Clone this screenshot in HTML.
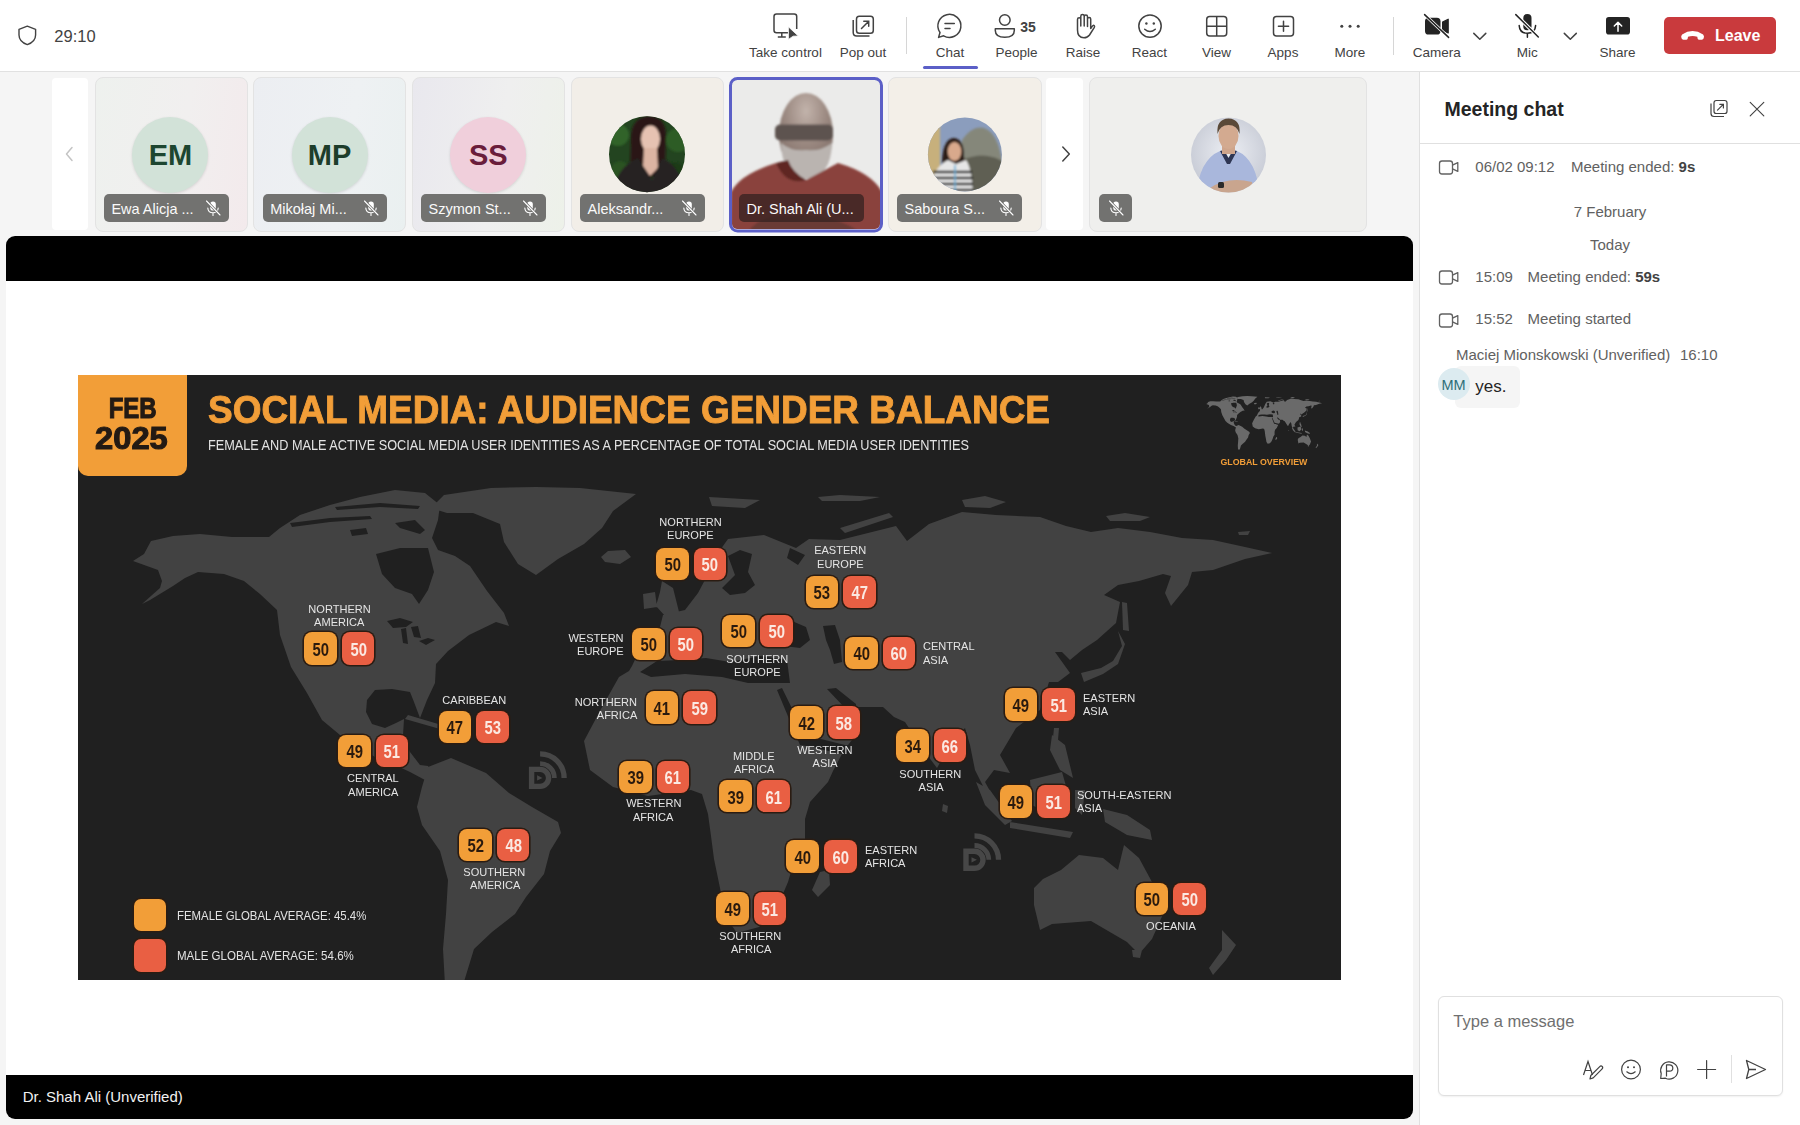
<!DOCTYPE html>
<html><head><meta charset="utf-8">
<style>
*{margin:0;padding:0;box-sizing:border-box}
html,body{width:1800px;height:1125px;overflow:hidden;background:#f5f5f5;font-family:"Liberation Sans",sans-serif;color:#242424;position:relative}
svg{overflow:visible}
</style></head><body>
<div style="position:absolute;left:0px;top:0px;width:1800px;height:71px;background:#fff"></div>
<div style="position:absolute;left:0px;top:71px;width:1800px;height:1px;background:#e1e1e1"></div>
<svg style="position:absolute;left:17px;top:24px;" width="22" height="23" viewBox="17 24 22 23"><path d="M27.3 26.2 L35.6 29.3 V35 C35.6 39.6 32.6 42.8 27.3 44.6 C22 42.8 19 39.6 19 35 V29.3 Z" fill="none" stroke="#424242" stroke-width="1.4" stroke-linejoin="round"/></svg>
<div style="position:absolute;left:54.3px;top:27.73px;font-size:16.5px;line-height:16.5px;color:#424242;font-weight:normal;white-space:nowrap;font-family:"Liberation Sans",sans-serif;">29:10</div>
<div style="position:absolute;left:285.5px;width:1000px;text-align:center;top:46.27px;font-size:13.5px;line-height:13.5px;color:#424242;font-weight:normal;white-space:nowrap;font-family:"Liberation Sans",sans-serif;">Take control</div>
<div style="position:absolute;left:363.0px;width:1000px;text-align:center;top:46.27px;font-size:13.5px;line-height:13.5px;color:#424242;font-weight:normal;white-space:nowrap;font-family:"Liberation Sans",sans-serif;">Pop out</div>
<div style="position:absolute;left:450.0px;width:1000px;text-align:center;top:46.27px;font-size:13.5px;line-height:13.5px;color:#424242;font-weight:normal;white-space:nowrap;font-family:"Liberation Sans",sans-serif;">Chat</div>
<div style="position:absolute;left:516.5px;width:1000px;text-align:center;top:46.27px;font-size:13.5px;line-height:13.5px;color:#424242;font-weight:normal;white-space:nowrap;font-family:"Liberation Sans",sans-serif;">People</div>
<div style="position:absolute;left:583.0px;width:1000px;text-align:center;top:46.27px;font-size:13.5px;line-height:13.5px;color:#424242;font-weight:normal;white-space:nowrap;font-family:"Liberation Sans",sans-serif;">Raise</div>
<div style="position:absolute;left:649.5px;width:1000px;text-align:center;top:46.27px;font-size:13.5px;line-height:13.5px;color:#424242;font-weight:normal;white-space:nowrap;font-family:"Liberation Sans",sans-serif;">React</div>
<div style="position:absolute;left:716.6px;width:1000px;text-align:center;top:46.27px;font-size:13.5px;line-height:13.5px;color:#424242;font-weight:normal;white-space:nowrap;font-family:"Liberation Sans",sans-serif;">View</div>
<div style="position:absolute;left:783.0px;width:1000px;text-align:center;top:46.27px;font-size:13.5px;line-height:13.5px;color:#424242;font-weight:normal;white-space:nowrap;font-family:"Liberation Sans",sans-serif;">Apps</div>
<div style="position:absolute;left:849.9px;width:1000px;text-align:center;top:46.27px;font-size:13.5px;line-height:13.5px;color:#424242;font-weight:normal;white-space:nowrap;font-family:"Liberation Sans",sans-serif;">More</div>
<div style="position:absolute;left:936.7px;width:1000px;text-align:center;top:46.27px;font-size:13.5px;line-height:13.5px;color:#424242;font-weight:normal;white-space:nowrap;font-family:"Liberation Sans",sans-serif;">Camera</div>
<div style="position:absolute;left:1027.2px;width:1000px;text-align:center;top:46.27px;font-size:13.5px;line-height:13.5px;color:#424242;font-weight:normal;white-space:nowrap;font-family:"Liberation Sans",sans-serif;">Mic</div>
<div style="position:absolute;left:1117.5px;width:1000px;text-align:center;top:46.27px;font-size:13.5px;line-height:13.5px;color:#424242;font-weight:normal;white-space:nowrap;font-family:"Liberation Sans",sans-serif;">Share</div>
<svg style="position:absolute;left:770px;top:10px;" width="32" height="32" viewBox="770 10 32 32"><path d="M788 32.8 H776.5 Q774 32.8 774 30.3 V16.5 Q774 14 776.5 14 H794.2 Q796.7 14 796.7 16.5 V29" fill="none" stroke="#424242" stroke-width="1.5"/><path d="M781.8 32.8 V37 M777.8 37 H785.8" stroke="#424242" stroke-width="1.5"/><path d="M788.4 26.8 L798.3 36 L793.2 36.2 L788.4 39.4 Z" fill="#424242" stroke="#fff" stroke-width="0.8" stroke-linejoin="round"/></svg>
<svg style="position:absolute;left:850px;top:12px;" width="26" height="27" viewBox="850 12 26 27"><rect x="856.5" y="16.2" width="16.8" height="17" rx="2.8" fill="none" stroke="#424242" stroke-width="1.5"/><path d="M853.2 20 V32.5 Q853.2 36 856.7 36 H869.5" fill="none" stroke="#424242" stroke-width="1.5"/><path d="M861.5 28.5 L868.5 21.5 M863.8 21.3 H868.7 V26.2" fill="none" stroke="#424242" stroke-width="1.5" stroke-linecap="round"/></svg>
<div style="position:absolute;left:906px;top:17px;width:1px;height:37px;background:#d6d6d6"></div>
<div style="position:absolute;left:1393px;top:17px;width:1px;height:38px;background:#d6d6d6"></div>
<svg style="position:absolute;left:934px;top:11px;" width="32" height="30" viewBox="934 11 32 30"><path d="M938.6 37.4 L940 32.5 A11.5 11.5 0 1 1 943.6 35.8 Z" fill="none" stroke="#424242" stroke-width="1.5" stroke-linejoin="round"/><path d="M945 23.6 H954.3 M945 28.5 H950" stroke="#424242" stroke-width="1.5" stroke-linecap="round"/></svg>
<div style="position:absolute;left:923px;top:66px;width:54.5px;height:3px;background:#5b5fc7;border-radius:2px"></div>
<svg style="position:absolute;left:990px;top:11px;" width="30" height="30" viewBox="990 11 30 30"><circle cx="1004.8" cy="20" r="5.3" fill="none" stroke="#424242" stroke-width="1.5"/><path d="M995.3 28.8 H1014.3 V30.5 Q1014.3 37.3 1004.8 37.3 Q995.3 37.3 995.3 30.5 Z" fill="none" stroke="#424242" stroke-width="1.5" stroke-linejoin="round"/></svg>
<div style="position:absolute;left:1020.3px;top:19.75px;font-size:14px;line-height:14px;color:#424242;font-weight:bold;white-space:nowrap;font-family:"Liberation Sans",sans-serif;">35</div>
<svg style="position:absolute;left:1070px;top:11px;" width="28" height="30" viewBox="1070 11 28 30"><path d="M1077.5 30 V19.5 Q1077.5 17.8 1079.2 17.8 Q1080.8 17.8 1080.8 19.5 V26 V16.2 Q1080.8 14.5 1082.5 14.5 Q1084.2 14.5 1084.2 16.2 V26 V16.8 Q1084.2 15.1 1085.9 15.1 Q1087.5 15.1 1087.5 16.8 V26.5 V19 Q1087.5 17.4 1089.1 17.4 Q1090.7 17.4 1090.7 19 V28.5 L1092.2 26.3 Q1093.3 24.7 1094.3 25.8 Q1094.9 26.5 1094.2 27.7 L1089.5 35 Q1087.5 37.8 1084 37.8 Q1077.5 37.8 1077.5 30 Z" fill="none" stroke="#424242" stroke-width="1.5" stroke-linejoin="round"/></svg>
<svg style="position:absolute;left:1134px;top:11px;" width="32" height="30" viewBox="1134 11 32 30"><circle cx="1150" cy="26.1" r="11.2" fill="none" stroke="#424242" stroke-width="1.5"/><circle cx="1146.4" cy="23.5" r="1.2" fill="#424242"/><circle cx="1153.8" cy="23.5" r="1.2" fill="#424242"/><path d="M1144.7 29.2 Q1150 33.8 1155.3 29.2" fill="none" stroke="#424242" stroke-width="1.5" stroke-linecap="round"/></svg>
<svg style="position:absolute;left:1202px;top:12px;" width="30" height="28" viewBox="1202 12 30 28"><rect x="1206.7" y="16.5" width="20" height="19.5" rx="3" fill="none" stroke="#424242" stroke-width="1.5"/><path d="M1216.7 16.5 V36 M1206.7 26.2 H1226.7" stroke="#424242" stroke-width="1.5"/></svg>
<svg style="position:absolute;left:1268px;top:12px;" width="30" height="28" viewBox="1268 12 30 28"><rect x="1273.5" y="16.5" width="20" height="19.5" rx="3" fill="none" stroke="#424242" stroke-width="1.5"/><path d="M1283.5 21.2 V31.3 M1278.4 26.2 H1288.6" stroke="#424242" stroke-width="1.5" stroke-linecap="round"/></svg>
<svg style="position:absolute;left:1336px;top:20px;" width="28" height="12" viewBox="1336 20 28 12"><circle cx="1341.8" cy="26.2" r="1.5" fill="#424242"/><circle cx="1350" cy="26.2" r="1.5" fill="#424242"/><circle cx="1358.2" cy="26.2" r="1.5" fill="#424242"/></svg>
<svg style="position:absolute;left:1420px;top:10px;" width="34" height="32" viewBox="1420 10 34 32"><rect x="1425" y="17.7" width="15.5" height="16.9" rx="3.6" fill="#242424"/><path d="M1442.6 22 L1448.2 19.2 V33 L1442.6 30.2 Z" fill="#242424" stroke="#242424" stroke-width="1.2" stroke-linejoin="round"/><path d="M1424.6 14.6 L1448.6 37.4" stroke="#fff" stroke-width="3"/><path d="M1424.6 14.6 L1448.6 37.4" stroke="#242424" stroke-width="1.5" stroke-linecap="round"/></svg>
<svg style="position:absolute;left:1470px;top:30px;" width="20" height="12" viewBox="1470 30 20 12"><path d="M1473.8 33.4 L1479.8 39.3 L1485.8 33.4" fill="none" stroke="#424242" stroke-width="1.5" stroke-linecap="round" stroke-linejoin="round"/></svg>
<svg style="position:absolute;left:1560px;top:30px;" width="20" height="12" viewBox="1560 30 20 12"><path d="M1564.3 33.4 L1570.3 39.3 L1576.3 33.4" fill="none" stroke="#424242" stroke-width="1.5" stroke-linecap="round" stroke-linejoin="round"/></svg>
<svg style="position:absolute;left:1512px;top:10px;" width="30" height="32" viewBox="1512 10 30 32"><rect x="1523.3" y="14" width="8.2" height="16.3" rx="4.1" fill="#242424"/><path d="M1519.2 25.6 Q1519.6 33.2 1527.4 33.2 Q1535.2 33.2 1535.6 25.6 M1527.4 33.2 V37.2" fill="none" stroke="#242424" stroke-width="1.5" stroke-linecap="round"/><path d="M1515.8 14.6 L1538.3 37" stroke="#fff" stroke-width="3.4"/><path d="M1515.8 14.6 L1538.3 37" stroke="#242424" stroke-width="1.5" stroke-linecap="round"/></svg>
<svg style="position:absolute;left:1602px;top:14px;" width="32" height="24" viewBox="1602 14 32 24"><rect x="1606" y="17" width="24" height="17.6" rx="2.8" fill="#242424"/><path d="M1618 31.3 V22.3 M1614.3 26 L1618 22.3 L1621.7 26" fill="none" stroke="#fff" stroke-width="1.5" stroke-linecap="round" stroke-linejoin="round"/></svg>
<div style="position:absolute;left:1663.5px;top:16.9px;width:112.2px;height:37.2px;background:#c93a3d;border-radius:5px"></div>
<svg style="position:absolute;left:1678px;top:26px;" width="30" height="18" viewBox="1678 26 30 18"><path d="M1681.5 38.2 Q1680.6 35.9 1682.1 34.4 Q1692.6 27.7 1703.1 34.4 Q1704.6 35.9 1703.7 38.2 Q1703.2 39.6 1701.8 39.7 L1699.2 39.7 Q1697.9 39.6 1697.6 38.4 L1697.3 36.8 Q1692.6 35 1688 36.8 L1687.7 38.4 Q1687.4 39.6 1686.1 39.7 L1683.4 39.7 Q1682 39.6 1681.5 38.2 Z" fill="#fff"/></svg>
<div style="position:absolute;left:1715.0px;top:28.06px;font-size:16px;line-height:16px;color:#fff;font-weight:bold;white-space:nowrap;font-family:"Liberation Sans",sans-serif;">Leave</div>
<div style="position:absolute;left:52px;top:78px;width:36px;height:152px;background:#fff;border-radius:4px"></div>
<svg style="position:absolute;left:62px;top:144px;" width="14" height="20" viewBox="62 144 14 20"><path d="M72 147.5 L66.5 154 L72 160.5" fill="none" stroke="#c4c4c4" stroke-width="1.5" stroke-linecap="round" stroke-linejoin="round"/></svg>
<div style="position:absolute;left:1046px;top:78px;width:37px;height:152px;background:#fff;border-radius:4px"></div>
<svg style="position:absolute;left:1058px;top:144px;" width="16" height="20" viewBox="1058 144 16 20"><path d="M1062.8 147 L1069.3 154 L1062.8 161" fill="none" stroke="#424242" stroke-width="1.5" stroke-linecap="round" stroke-linejoin="round"/></svg>
<div style="position:absolute;left:95px;top:77px;width:153px;height:155px;background:linear-gradient(100deg,#eef1ee 0%,#f1efef 55%,#f3eaec 100%);border:1px solid #e3e3e3;border-radius:8px"></div>
<div style="position:absolute;left:253px;top:77px;width:153px;height:155px;background:linear-gradient(100deg,#eceef2 0%,#eef1f3 60%,#eaf0f0 100%);border:1px solid #e3e3e3;border-radius:8px"></div>
<div style="position:absolute;left:412px;top:77px;width:153px;height:155px;background:linear-gradient(100deg,#e9e8ee 0%,#efefef 55%,#edf1e9 100%);border:1px solid #e3e3e3;border-radius:8px"></div>
<div style="position:absolute;left:571px;top:77px;width:153px;height:155px;background:#f2eee8;border:1px solid #e3e3e3;border-radius:8px"></div>
<div style="position:absolute;left:888px;top:77px;width:154px;height:155px;background:#f3efe8;border:1px solid #e3e3e3;border-radius:8px"></div>
<div style="position:absolute;left:1089px;top:77px;width:278px;height:155px;background:#efefed;border:1px solid #e3e3e3;border-radius:8px"></div>
<div style="position:absolute;left:132.4px;top:116.6px;width:76px;height:76px;border-radius:50%;background:#d2e2d8;box-shadow:0 1px 3px rgba(0,0,0,.12)"></div>
<div style="position:absolute;left:-329.6px;width:1000px;text-align:center;top:140.75px;font-size:29px;line-height:29px;color:#1d4630;font-weight:bold;white-space:nowrap;font-family:"Liberation Sans",sans-serif;letter-spacing:0.5px">EM</div>
<div style="position:absolute;left:291.5px;top:116.6px;width:76px;height:76px;border-radius:50%;background:#d2e2d8;box-shadow:0 1px 3px rgba(0,0,0,.12)"></div>
<div style="position:absolute;left:-170.5px;width:1000px;text-align:center;top:140.75px;font-size:29px;line-height:29px;color:#1d3d2b;font-weight:bold;white-space:nowrap;font-family:"Liberation Sans",sans-serif;letter-spacing:0.5px">MP</div>
<div style="position:absolute;left:450.3px;top:116.6px;width:76px;height:76px;border-radius:50%;background:#f0cfdb;box-shadow:0 1px 3px rgba(0,0,0,.12)"></div>
<div style="position:absolute;left:-11.7px;width:1000px;text-align:center;top:140.75px;font-size:29px;line-height:29px;color:#6a1d3b;font-weight:bold;white-space:nowrap;font-family:"Liberation Sans",sans-serif;letter-spacing:0.5px">SS</div>
<svg style="position:absolute;left:607px;top:114px;" width="80" height="80" viewBox="607 114 80 80"><defs><clipPath id="ca"><circle cx="647" cy="154.2" r="38"/></clipPath><filter id="b1"><feGaussianBlur stdDeviation="0.9"/></filter></defs><g clip-path="url(#ca)"><rect x="607" y="114" width="80" height="80" fill="#234420"/><g filter="url(#b1)"><circle cx="618" cy="135" r="11" fill="#356b2c" opacity=".8"/><circle cx="678" cy="140" r="12" fill="#2f6228" opacity=".8"/><circle cx="620" cy="170" r="9" fill="#2c5a25" opacity=".7"/><circle cx="675" cy="172" r="10" fill="#1b3a18"/><path d="M630 175 L631 135 Q633 116 650 116 Q666 117 666 136 L665 170 L650 178 Z" fill="#2a1813"/><ellipse cx="650.5" cy="139" rx="9.5" ry="13.5" fill="#e6c2b2"/><path d="M644 148 L657 148 L658 168 L650 176 L643 166 Z" fill="#dcb4a2"/><path d="M612 200 Q614 168 638 158 L652 180 L662 158 Q682 166 686 200 Z" fill="#252323"/></g></g></svg>
<svg style="position:absolute;left:926px;top:116px;" width="78" height="78" viewBox="926 116 78 78"><defs><clipPath id="cb"><circle cx="964.9" cy="154.4" r="37"/></clipPath><filter id="b2"><feGaussianBlur stdDeviation="0.8"/></filter></defs><g clip-path="url(#cb)"><rect x="926" y="116" width="78" height="78" fill="#8b9dbd"/><g filter="url(#b2)"><path d="M960 185 L962 140 Q975 122 988 130 Q1004 140 1004 194 L960 194 Z" fill="#85877a"/><path d="M962 160 Q985 150 1004 162 L1004 194 L962 194 Z" fill="#5f5f52"/><rect x="927" y="122" width="13" height="72" fill="#c7b07c"/><path d="M942 170 Q941 140 953 138 Q964 138 964 156 L966 172 Z" fill="#2a1c18"/><ellipse cx="954.5" cy="151.5" rx="6.8" ry="9.5" fill="#d9a98c"/><path d="M930 196 Q931 168 948 160 L956 164 L966 160 Q972 168 973 196 Z" fill="#e6e6e6"/><path d="M933 172 H972 M932 178 H973 M931 184 H973 M931 190 H973" stroke="#1e1e1e" stroke-width="2.6"/><path d="M955 165 V196" stroke="#6ab0d8" stroke-width="1.6"/></g></g></svg>
<svg style="position:absolute;left:1190px;top:117px;" width="78" height="78" viewBox="1190 117 78 78"><defs><clipPath id="cc"><circle cx="1228.5" cy="155" r="37.5"/></clipPath><filter id="b3"><feGaussianBlur stdDeviation="0.7"/></filter><radialGradient id="gg" cx=".5" cy=".45" r=".6"><stop offset="0" stop-color="#eceef3"/><stop offset="1" stop-color="#c3c7d2"/></radialGradient></defs><g clip-path="url(#cc)"><rect x="1190" y="117" width="78" height="78" fill="url(#gg)"/><g filter="url(#b3)"><path d="M1196 200 Q1198 160 1220 151 L1228 158 L1237 151 Q1258 160 1260 200 Z" fill="#a9b7dc"/><path d="M1220 151 L1227 164 L1230 164 L1237 151 L1233 150 L1228.5 158 L1224 150 Z" fill="#2d3552"/><rect x="1222" y="142" width="13" height="12" fill="#cfa58c"/><ellipse cx="1228.5" cy="136" rx="10" ry="13" fill="#d3aa90"/><path d="M1217.5 134 Q1216 119 1228.5 118.5 Q1241 119 1239.5 134 Q1237 125 1228.5 125 Q1220 125 1217.5 134 Z" fill="#5a4838"/><path d="M1210 188 Q1228 176 1252 182 L1254 194 L1210 196 Z" fill="#c9a58e"/><rect x="1218" y="182" width="6" height="6" rx="1.5" fill="#2a2a2a"/></g></g></svg>
<div style="position:absolute;left:103.9px;top:194px;width:125px;height:28px;background:#727270;border-radius:5px"></div>
<div style="position:absolute;left:111.4px;top:201.53px;font-size:14.5px;line-height:14.5px;color:#fafafa;font-weight:normal;white-space:nowrap;font-family:"Liberation Sans",sans-serif;">Ewa Alicja ...</div>
<svg style="position:absolute;left:205.9px;top:200px;" width="16" height="16" viewBox="205.9 200 16 16"><rect x="210.1" y="201.5" width="5.6" height="9" rx="2.8" fill="#fff"/><path d="M207.70000000000002 208.0 Q207.9 212.7 212.9 212.7 Q217.9 212.7 218.1 208.0 M212.9 212.7 V215.5" fill="none" stroke="#fff" stroke-width="1.1" stroke-linecap="round"/><path d="M206.4 201.0 L219.9 215.0" stroke="#6e6e6c" stroke-width="2.6"/><path d="M206.4 201.0 L219.9 215.0" stroke="#fff" stroke-width="1.1" stroke-linecap="round"/></svg>
<div style="position:absolute;left:262.7px;top:194px;width:124px;height:28px;background:#727270;border-radius:5px"></div>
<div style="position:absolute;left:270.2px;top:201.53px;font-size:14.5px;line-height:14.5px;color:#fafafa;font-weight:normal;white-space:nowrap;font-family:"Liberation Sans",sans-serif;">Mikołaj Mi...</div>
<svg style="position:absolute;left:363.7px;top:200px;" width="16" height="16" viewBox="363.7 200 16 16"><rect x="367.9" y="201.5" width="5.6" height="9" rx="2.8" fill="#fff"/><path d="M365.5 208.0 Q365.7 212.7 370.7 212.7 Q375.7 212.7 375.9 208.0 M370.7 212.7 V215.5" fill="none" stroke="#fff" stroke-width="1.1" stroke-linecap="round"/><path d="M364.2 201.0 L377.7 215.0" stroke="#6e6e6c" stroke-width="2.6"/><path d="M364.2 201.0 L377.7 215.0" stroke="#fff" stroke-width="1.1" stroke-linecap="round"/></svg>
<div style="position:absolute;left:421px;top:194px;width:125px;height:28px;background:#727270;border-radius:5px"></div>
<div style="position:absolute;left:428.5px;top:201.53px;font-size:14.5px;line-height:14.5px;color:#fafafa;font-weight:normal;white-space:nowrap;font-family:"Liberation Sans",sans-serif;">Szymon St...</div>
<svg style="position:absolute;left:523px;top:200px;" width="16" height="16" viewBox="523 200 16 16"><rect x="527.2" y="201.5" width="5.6" height="9" rx="2.8" fill="#fff"/><path d="M524.8 208.0 Q525 212.7 530 212.7 Q535 212.7 535.2 208.0 M530 212.7 V215.5" fill="none" stroke="#fff" stroke-width="1.1" stroke-linecap="round"/><path d="M523.5 201.0 L537 215.0" stroke="#6e6e6c" stroke-width="2.6"/><path d="M523.5 201.0 L537 215.0" stroke="#fff" stroke-width="1.1" stroke-linecap="round"/></svg>
<div style="position:absolute;left:580px;top:194px;width:125px;height:28px;background:#727270;border-radius:5px"></div>
<div style="position:absolute;left:587.5px;top:201.53px;font-size:14.5px;line-height:14.5px;color:#fafafa;font-weight:normal;white-space:nowrap;font-family:"Liberation Sans",sans-serif;">Aleksandr...</div>
<svg style="position:absolute;left:682px;top:200px;" width="16" height="16" viewBox="682 200 16 16"><rect x="686.2" y="201.5" width="5.6" height="9" rx="2.8" fill="#fff"/><path d="M683.8 208.0 Q684 212.7 689 212.7 Q694 212.7 694.2 208.0 M689 212.7 V215.5" fill="none" stroke="#fff" stroke-width="1.1" stroke-linecap="round"/><path d="M682.5 201.0 L696 215.0" stroke="#6e6e6c" stroke-width="2.6"/><path d="M682.5 201.0 L696 215.0" stroke="#fff" stroke-width="1.1" stroke-linecap="round"/></svg>
<div style="position:absolute;left:897px;top:194px;width:125px;height:28px;background:#727270;border-radius:5px"></div>
<div style="position:absolute;left:904.5px;top:201.53px;font-size:14.5px;line-height:14.5px;color:#fafafa;font-weight:normal;white-space:nowrap;font-family:"Liberation Sans",sans-serif;">Saboura S...</div>
<svg style="position:absolute;left:999px;top:200px;" width="16" height="16" viewBox="999 200 16 16"><rect x="1003.2" y="201.5" width="5.6" height="9" rx="2.8" fill="#fff"/><path d="M1000.8 208.0 Q1001 212.7 1006 212.7 Q1011 212.7 1011.2 208.0 M1006 212.7 V215.5" fill="none" stroke="#fff" stroke-width="1.1" stroke-linecap="round"/><path d="M999.5 201.0 L1013 215.0" stroke="#6e6e6c" stroke-width="2.6"/><path d="M999.5 201.0 L1013 215.0" stroke="#fff" stroke-width="1.1" stroke-linecap="round"/></svg>
<div style="position:absolute;left:1099px;top:194px;width:33px;height:28px;background:#727270;border-radius:5px"></div>
<svg style="position:absolute;left:1109px;top:200px;" width="16" height="16" viewBox="1109 200 16 16"><rect x="1113.2" y="201.5" width="5.6" height="9" rx="2.8" fill="#fff"/><path d="M1110.8 208.0 Q1111 212.7 1116 212.7 Q1121 212.7 1121.2 208.0 M1116 212.7 V215.5" fill="none" stroke="#fff" stroke-width="1.1" stroke-linecap="round"/><path d="M1109.5 201.0 L1123 215.0" stroke="#6e6e6c" stroke-width="2.6"/><path d="M1109.5 201.0 L1123 215.0" stroke="#fff" stroke-width="1.1" stroke-linecap="round"/></svg>
<svg style="position:absolute;left:729px;top:77px;" width="154" height="156" viewBox="729 77 154 156"><defs><clipPath id="cv"><rect x="732" y="80" width="148" height="149" rx="5"/></clipPath><filter id="bl" x="-10%" y="-10%" width="120%" height="120%"><feGaussianBlur stdDeviation="1.3"/></filter><radialGradient id="hd" cx=".5" cy=".22" r=".75"><stop offset="0" stop-color="#c2b3ab"/><stop offset=".5" stop-color="#9c8a82"/><stop offset="1" stop-color="#7d6c65"/></radialGradient></defs><g clip-path="url(#cv)"><rect x="732" y="80" width="148" height="149" fill="#ebebea"/><g filter="url(#bl)"><ellipse cx="806" cy="134" rx="27" ry="41" fill="url(#hd)"/><rect x="775" y="124.5" width="58" height="16" rx="5" fill="#5d5350"/><path d="M781 143 Q782 178 806 179 Q831 178 832 143 Q820 152 806 150 Q792 152 781 143 Z" fill="#bab4b0"/><path d="M730 235 L731 192 Q740 174 776 163 L806 180 L838 163 Q872 173 882 192 L882 235 Z" fill="#8a433d"/><path d="M776 163 Q786 186 806 180 Q792 172 788 160 Z" fill="#5e2624"/><path d="M748 232 Q760 214 790 216 Q830 212 860 232 Z" fill="#6b3b35"/></g></g><rect x="730.5" y="78.5" width="151" height="152.5" rx="7" fill="none" stroke="#5b5fc7" stroke-width="3"/></svg>
<div style="position:absolute;left:739px;top:194px;width:124.5px;height:28px;background:rgba(55,35,33,.78);border-radius:5px"></div>
<div style="position:absolute;left:746.5px;top:201.53px;font-size:14.5px;line-height:14.5px;color:#fafafa;font-weight:normal;white-space:nowrap;font-family:"Liberation Sans",sans-serif;">Dr. Shah Ali (U...</div>
<div style="position:absolute;left:6px;top:236px;width:1407px;height:883px;background:#fff;border-radius:9px;overflow:hidden"></div>
<div style="position:absolute;left:6px;top:236px;width:1407px;height:45px;background:#000;border-radius:9px 9px 0 0"></div>
<div style="position:absolute;left:6px;top:1075px;width:1407px;height:44px;background:#000;border-radius:0 0 9px 9px"></div>
<div style="position:absolute;left:22.7px;top:1088.80px;font-size:15px;line-height:15px;color:#f2f2f2;font-weight:normal;white-space:nowrap;font-family:"Liberation Sans",sans-serif;">Dr. Shah Ali (Unverified)</div>
<div style="position:absolute;left:78px;top:375px;width:1263px;height:605px;background:#202020"></div>
<svg style="position:absolute;left:78px;top:375px;" width="1263" height="605" viewBox="78 375 1263 605"><defs><clipPath id="slc"><rect x="78" y="375" width="1263" height="605"/></clipPath></defs><g clip-path="url(#slc)"><path d="M144 554 L151 541 L173 536 L200 534 L232 537 L269 537 L280 528 L300 515 L330 505 L360 497 L395 490 L425 493 L440 505 L438 520 L432 538 L438 550 L455 556 L470 566 L487 591 L504 613 L509 626 L496 622 L469 635 L448 651 L436 664 L435 683 L427 700 L420 718 L414 702 L410 692 L392 689 L375 690 L367 700 L366 712 L372 724 L385 728 L396 723 L404 719 L403 735 L410 752 L420 765 L428 766 L432 777 L425 780 L410 772 L395 765 L375 757 L355 745 L340 735 L322 720 L307 693 L291 667 L280 635 L277 610 L260 594 L244 581 L224 574 L198 572 L185 578 L173 586 L150 600 L142 604 L160 588 L162 581 L158 570 L133 561 Z M431 508 L444 495 L491 488 L536 487 L580 488 L636 494 L613 511 L602 528 L584 544 L558 559 L536 575 L518 564 L504 542 L500 524 L473 513 L447 513 Z M428 767 L451 758 L486 773 L509 793 L532 807 L558 822 L561 833 L550 851 L544 874 L526 897 L515 914 L492 932 L474 949 L463 985 L445 985 L443 949 L446 914 L448 880 L440 851 L422 825 L417 807 L422 787 Z M629 671 L632 666 L642 645 L648 639 L660 627 L663 615 L685 610 L698 593 L706 578 L713 560 L728 539 L764 535 L796 548 L809 539 L840 540 L896 526 L907 541 L929 524 L962 512 L996 515 L1040 517 L1066 526 L1091 532 L1118 528 L1150 532 L1182 538 L1213 540 L1245 547 L1272 553 L1245 559 L1213 570 L1192 572 L1188 585 L1171 606 L1165 593 L1171 576 L1163 574 L1139 581 L1118 585 L1104 595 L1120 602 L1116 623 L1097 640 L1082 650 L1070 660 L1062 652 L1055 652 L1070 673 L1058 682 L1049 682 L1040 710 L1016 728 L1000 755 L1010 773 L994 770 L985 782 L1000 809 L985 790 L975 770 L970 745 L965 728 L950 745 L937 768 L922 748 L905 722 L894 717 L883 707 L856 707 L860 730 L848 745 L830 748 L815 748 L842 754 L833 771 L828 782 L810 802 L805 819 L805 848 L793 865 L788 882 L776 910 L759 927 L737 933 L725 916 L720 888 L714 859 L711 836 L708 814 L702 794 L691 790 L648 796 L613 787 L590 770 L584 741 L601 709 L619 677 Z M601 557 L608 551 L625 550 L631 557 L620 564 L605 562 Z M662 581 L673 588 L679 612 L665 616 L656 606 L660 592 Z M643 594 L655 592 L657 607 L644 609 Z M820 872 L829 870 L830 885 L818 897 L812 890 Z M943 804 L948 806 L947 813 L942 811 Z M1118 631 L1125 644 L1118 664 L1103 674 L1084 682 L1081 673 L1101 668 L1113 661 L1122 646 Z M1122 602 L1127 603 L1129 631 L1123 630 Z M1054 728 L1059 728 L1058 740 L1053 738 Z M1052 735 L1065 745 L1073 778 L1060 770 L1050 750 Z M976 782 L990 790 L1012 821 L1005 825 L985 805 Z M1010 822 L1073 832 L1070 838 L1010 828 Z M1030 780 L1062 772 L1070 800 L1050 815 L1032 805 Z M1075 790 L1085 790 L1082 815 L1075 808 Z M1103 809 L1127 815 L1150 830 L1152 840 L1127 835 L1105 822 Z M1034 888 L1043 879 L1061 870 L1079 855 L1103 858 L1118 870 L1124 845 L1139 858 L1152 882 L1164 912 L1152 939 L1139 954 L1127 942 L1091 921 L1052 924 L1040 930 L1034 905 Z M1132 950 L1142 950 L1140 958 L1133 957 Z M1222 930 L1236 945 L1226 960 L1213 975 L1209 968 L1222 950 Z M408 715 L445 726 L440 729 L405 719 Z M709 497 L760 500 L745 508 L712 506 Z M840 528 L889 513 L893 517 L845 533 Z M962 500 L985 496 L1006 502 L990 508 L965 507 Z M1106 516 L1125 513 L1150 517 L1140 521 L1110 521 Z M1238 532 L1250 531 L1248 535 L1239 535 Z M818 497 L840 495 L880 497 L860 501 L822 501 Z" fill="#424242"/><path d="M387 621 L400 618 L413 622 L406 627 L393 628 Z M401 629 L406 628 L408 644 L403 643 Z M411 627 L418 626 L421 638 L414 637 Z M419 641 L428 638 L435 640 L426 645 Z M290 523 L330 518 L370 516 L372 519 L330 522 L292 527 Z M335 507 L380 503 L420 506 L418 509 L380 507 L337 510 Z M395 523 L415 520 L425 530 L420 534 L400 528 Z M350 530 L366 528 L368 534 L352 536 Z M640 672 L657 661 L680 660 L706 658 L730 662 L760 656 L787 660 L790 683 L748 683 L722 677 L685 674 L651 677 Z M776 628 L792 621 L806 627 L810 640 L800 648 L784 646 L775 638 Z M823 626 L835 625 L840 640 L842 662 L834 664 L830 650 L826 640 Z M728 556 L740 550 L752 554 L748 572 L755 585 L745 593 L730 595 L722 588 L735 575 Z M777 690 L782 688 L805 735 L845 745 L845 752 L800 745 Z M827 689 L836 688 L856 704 L856 710 L845 708 Z M790 548 L805 555 L798 565 L787 558 Z M376 554 L400 548 L428 548 L434 572 L428 590 L419 604 L412 594 L395 588 L382 574 Z" fill="#202020"/></g></svg>
<svg style="position:absolute;left:1206px;top:395.5px;overflow:visible" width="118" height="56" viewBox="0 0 118 56"><g transform="scale(0.1016,0.107) translate(-130,-486)"><path d="M144 554 L151 541 L173 536 L200 534 L232 537 L269 537 L280 528 L300 515 L330 505 L360 497 L395 490 L425 493 L440 505 L438 520 L432 538 L438 550 L455 556 L470 566 L487 591 L504 613 L509 626 L496 622 L469 635 L448 651 L436 664 L435 683 L427 700 L420 718 L414 702 L410 692 L392 689 L375 690 L367 700 L366 712 L372 724 L385 728 L396 723 L404 719 L403 735 L410 752 L420 765 L428 766 L432 777 L425 780 L410 772 L395 765 L375 757 L355 745 L340 735 L322 720 L307 693 L291 667 L280 635 L277 610 L260 594 L244 581 L224 574 L198 572 L185 578 L173 586 L150 600 L142 604 L160 588 L162 581 L158 570 L133 561 Z M431 508 L444 495 L491 488 L536 487 L580 488 L636 494 L613 511 L602 528 L584 544 L558 559 L536 575 L518 564 L504 542 L500 524 L473 513 L447 513 Z M428 767 L451 758 L486 773 L509 793 L532 807 L558 822 L561 833 L550 851 L544 874 L526 897 L515 914 L492 932 L474 949 L463 985 L445 985 L443 949 L446 914 L448 880 L440 851 L422 825 L417 807 L422 787 Z M629 671 L632 666 L642 645 L648 639 L660 627 L663 615 L685 610 L698 593 L706 578 L713 560 L728 539 L764 535 L796 548 L809 539 L840 540 L896 526 L907 541 L929 524 L962 512 L996 515 L1040 517 L1066 526 L1091 532 L1118 528 L1150 532 L1182 538 L1213 540 L1245 547 L1272 553 L1245 559 L1213 570 L1192 572 L1188 585 L1171 606 L1165 593 L1171 576 L1163 574 L1139 581 L1118 585 L1104 595 L1120 602 L1116 623 L1097 640 L1082 650 L1070 660 L1062 652 L1055 652 L1070 673 L1058 682 L1049 682 L1040 710 L1016 728 L1000 755 L1010 773 L994 770 L985 782 L1000 809 L985 790 L975 770 L970 745 L965 728 L950 745 L937 768 L922 748 L905 722 L894 717 L883 707 L856 707 L860 730 L848 745 L830 748 L815 748 L842 754 L833 771 L828 782 L810 802 L805 819 L805 848 L793 865 L788 882 L776 910 L759 927 L737 933 L725 916 L720 888 L714 859 L711 836 L708 814 L702 794 L691 790 L648 796 L613 787 L590 770 L584 741 L601 709 L619 677 Z M601 557 L608 551 L625 550 L631 557 L620 564 L605 562 Z M662 581 L673 588 L679 612 L665 616 L656 606 L660 592 Z M643 594 L655 592 L657 607 L644 609 Z M820 872 L829 870 L830 885 L818 897 L812 890 Z M943 804 L948 806 L947 813 L942 811 Z M1118 631 L1125 644 L1118 664 L1103 674 L1084 682 L1081 673 L1101 668 L1113 661 L1122 646 Z M1122 602 L1127 603 L1129 631 L1123 630 Z M1054 728 L1059 728 L1058 740 L1053 738 Z M1052 735 L1065 745 L1073 778 L1060 770 L1050 750 Z M976 782 L990 790 L1012 821 L1005 825 L985 805 Z M1010 822 L1073 832 L1070 838 L1010 828 Z M1030 780 L1062 772 L1070 800 L1050 815 L1032 805 Z M1075 790 L1085 790 L1082 815 L1075 808 Z M1103 809 L1127 815 L1150 830 L1152 840 L1127 835 L1105 822 Z M1034 888 L1043 879 L1061 870 L1079 855 L1103 858 L1118 870 L1124 845 L1139 858 L1152 882 L1164 912 L1152 939 L1139 954 L1127 942 L1091 921 L1052 924 L1040 930 L1034 905 Z M1132 950 L1142 950 L1140 958 L1133 957 Z M1222 930 L1236 945 L1226 960 L1213 975 L1209 968 L1222 950 Z M408 715 L445 726 L440 729 L405 719 Z M709 497 L760 500 L745 508 L712 506 Z M840 528 L889 513 L893 517 L845 533 Z M962 500 L985 496 L1006 502 L990 508 L965 507 Z M1106 516 L1125 513 L1150 517 L1140 521 L1110 521 Z M1238 532 L1250 531 L1248 535 L1239 535 Z M818 497 L840 495 L880 497 L860 501 L822 501 Z" fill="#6a6a6a"/><path d="M387 621 L400 618 L413 622 L406 627 L393 628 Z M401 629 L406 628 L408 644 L403 643 Z M411 627 L418 626 L421 638 L414 637 Z M419 641 L428 638 L435 640 L426 645 Z M290 523 L330 518 L370 516 L372 519 L330 522 L292 527 Z M335 507 L380 503 L420 506 L418 509 L380 507 L337 510 Z M395 523 L415 520 L425 530 L420 534 L400 528 Z M350 530 L366 528 L368 534 L352 536 Z M640 672 L657 661 L680 660 L706 658 L730 662 L760 656 L787 660 L790 683 L748 683 L722 677 L685 674 L651 677 Z M776 628 L792 621 L806 627 L810 640 L800 648 L784 646 L775 638 Z M823 626 L835 625 L840 640 L842 662 L834 664 L830 650 L826 640 Z M728 556 L740 550 L752 554 L748 572 L755 585 L745 593 L730 595 L722 588 L735 575 Z M777 690 L782 688 L805 735 L845 745 L845 752 L800 745 Z M827 689 L836 688 L856 704 L856 710 L845 708 Z M790 548 L805 555 L798 565 L787 558 Z M376 554 L400 548 L428 548 L434 572 L428 590 L419 604 L412 594 L395 588 L382 574 Z" fill="#202020"/></g></svg>
<svg style="position:absolute;left:78px;top:375px;" width="1263" height="605" viewBox="78 375 1263 605"><path fill-rule="evenodd" fill="#474747" d="M528.9 766.7 H540.1 A11.2 11.2 0 0 1 540.1 789.1 H528.9 Z M534.3 772.1 H540.1 A5.8 5.8 0 0 1 540.1 783.7 H534.3 Z"/><path fill="#474747" d="M537.1 775.3000000000001 L542.5 777.9000000000001 L537.1 780.5 Z"/><path fill="none" stroke="#474747" stroke-width="4.8" d="M540.1 763.6000000000001 A14.3 14.3 0 0 1 554.4 777.9000000000001"/><path fill="none" stroke="#474747" stroke-width="5.3" d="M540.1 753.9000000000001 A24 24 0 0 1 564.1 777.9000000000001"/><path fill-rule="evenodd" fill="#474747" d="M963.3 848.6 H974.5 A11.2 11.2 0 0 1 974.5 871.0 H963.3 Z M968.6999999999999 854.0 H974.5 A5.8 5.8 0 0 1 974.5 865.6 H968.6999999999999 Z"/><path fill="#474747" d="M971.5 857.2 L976.9 859.8000000000001 L971.5 862.4 Z"/><path fill="none" stroke="#474747" stroke-width="4.8" d="M974.5 845.5000000000001 A14.3 14.3 0 0 1 988.8 859.8000000000001"/><path fill="none" stroke="#474747" stroke-width="5.3" d="M974.5 835.8000000000001 A24 24 0 0 1 998.5 859.8000000000001"/></svg>
<div style="position:absolute;left:78px;top:375px;width:109px;height:101px;background:#f29e38;border-radius:0 0 10px 10px"></div>
<div style="position:absolute;left:102.51px;top:392.83px;width:61.0px;font-size:29.5px;line-height:29.5px;color:#231a14;font-weight:bold;white-space:nowrap;transform:scale(0.8138,1.0);transform-origin:center 25.1px;-webkit-text-stroke:1.1px #231a14;">FEB</div>
<div style="position:absolute;left:96.53px;top:423.26px;width:70.9px;font-size:31px;line-height:31px;color:#231a14;font-weight:bold;white-space:nowrap;transform:scale(1.0546,1.0);transform-origin:center 26.3px;-webkit-text-stroke:1.1px #231a14;">2025</div>
<div style="position:absolute;left:208.00px;top:390.26px;width:901.8px;font-size:39.5px;line-height:39.5px;color:#f29e38;font-weight:bold;white-space:nowrap;transform:scale(0.9358,1.0);transform-origin:left 33.6px;-webkit-text-stroke:0.9px #f29e38;">SOCIAL MEDIA: AUDIENCE GENDER BALANCE</div>
<div style="position:absolute;left:208.00px;top:437.53px;width:871.2px;font-size:14.5px;line-height:14.5px;color:#e2e2e2;font-weight:normal;white-space:nowrap;transform:scale(0.8755,1.0);transform-origin:left 12.3px;">FEMALE AND MALE ACTIVE SOCIAL MEDIA USER IDENTITIES AS A PERCENTAGE OF TOTAL SOCIAL MEDIA USER IDENTITIES</div>
<div style="position:absolute;left:1216.69px;top:456.76px;width:95.6px;font-size:9.5px;line-height:9.5px;color:#f29e38;font-weight:bold;white-space:nowrap;transform:scale(0.9292,1.0);transform-origin:center 8.1px;">GLOBAL OVERVIEW</div>
<div style="position:absolute;left:134.3px;top:898.7px;width:32px;height:32.6px;background:#f29e38;border-radius:7px;box-shadow:0 0 0 1.5px #2a1c12"></div>
<div style="position:absolute;left:134.3px;top:939.1px;width:32px;height:32.6px;background:#e95f43;border-radius:7px;box-shadow:0 0 0 1.5px #2a1c12"></div>
<div style="position:absolute;left:177.20px;top:909.40px;width:218.0px;font-size:13px;line-height:13px;color:#e2e2e2;font-weight:normal;white-space:nowrap;transform:scale(0.8762,1.0);transform-origin:left 11.0px;">FEMALE GLOBAL AVERAGE: 45.4%</div>
<div style="position:absolute;left:177.20px;top:949.10px;width:201.4px;font-size:13px;line-height:13px;color:#e2e2e2;font-weight:normal;white-space:nowrap;transform:scale(0.8865,1.0);transform-origin:left 11.0px;">MALE GLOBAL AVERAGE: 54.6%</div>
<div style="position:absolute;left:304.3px;top:632.4px;width:32.6px;height:32.4px;background:#f29e38;border-radius:8px;box-shadow:0 0 0 1.6px #2b1c12"></div>
<div style="position:absolute;left:310.04px;top:639.82px;width:23.1px;font-size:19px;line-height:19px;color:#2a1a0e;font-weight:bold;white-space:nowrap;transform:scale(0.7811,1.0);transform-origin:center 16.1px;">50</div>
<div style="position:absolute;left:341.90000000000003px;top:632.4px;width:32.6px;height:32.4px;background:#e95f43;border-radius:8px;box-shadow:0 0 0 1.6px #2b1c12"></div>
<div style="position:absolute;left:347.64px;top:639.82px;width:23.1px;font-size:19px;line-height:19px;color:#fbe9e2;font-weight:bold;white-space:nowrap;transform:scale(0.7811,1.0);transform-origin:center 16.1px;">50</div>
<div style="position:absolute;left:306.90px;top:603.57px;width:67.0px;font-size:11.5px;line-height:11.5px;color:#e4e4e4;font-weight:normal;white-space:nowrap;transform:scale(0.9600,1.0);transform-origin:center 9.8px;">NORTHERN</div>
<div style="position:absolute;left:313.20px;top:616.77px;width:54.4px;font-size:11.5px;line-height:11.5px;color:#e4e4e4;font-weight:normal;white-space:nowrap;transform:scale(0.9600,1.0);transform-origin:center 9.8px;">AMERICA</div>
<div style="position:absolute;left:438.7px;top:711.0px;width:32.6px;height:32.4px;background:#f29e38;border-radius:8px;box-shadow:0 0 0 1.6px #2b1c12"></div>
<div style="position:absolute;left:444.44px;top:718.42px;width:23.1px;font-size:19px;line-height:19px;color:#2a1a0e;font-weight:bold;white-space:nowrap;transform:scale(0.7811,1.0);transform-origin:center 16.1px;">47</div>
<div style="position:absolute;left:476.3px;top:711.0px;width:32.6px;height:32.4px;background:#e95f43;border-radius:8px;box-shadow:0 0 0 1.6px #2b1c12"></div>
<div style="position:absolute;left:482.04px;top:718.42px;width:23.1px;font-size:19px;line-height:19px;color:#fbe9e2;font-weight:bold;white-space:nowrap;transform:scale(0.7811,1.0);transform-origin:center 16.1px;">53</div>
<div style="position:absolute;left:440.56px;top:694.57px;width:68.5px;font-size:11.5px;line-height:11.5px;color:#e4e4e4;font-weight:normal;white-space:nowrap;transform:scale(0.9600,1.0);transform-origin:center 9.8px;">CARIBBEAN</div>
<div style="position:absolute;left:338.09999999999997px;top:734.9px;width:32.6px;height:32.4px;background:#f29e38;border-radius:8px;box-shadow:0 0 0 1.6px #2b1c12"></div>
<div style="position:absolute;left:343.84px;top:742.32px;width:23.1px;font-size:19px;line-height:19px;color:#2a1a0e;font-weight:bold;white-space:nowrap;transform:scale(0.7811,1.0);transform-origin:center 16.1px;">49</div>
<div style="position:absolute;left:375.7px;top:734.9px;width:32.6px;height:32.4px;background:#e95f43;border-radius:8px;box-shadow:0 0 0 1.6px #2b1c12"></div>
<div style="position:absolute;left:381.44px;top:742.32px;width:23.1px;font-size:19px;line-height:19px;color:#fbe9e2;font-weight:bold;white-space:nowrap;transform:scale(0.7811,1.0);transform-origin:center 16.1px;">51</div>
<div style="position:absolute;left:345.95px;top:773.47px;width:55.7px;font-size:11.5px;line-height:11.5px;color:#e4e4e4;font-weight:normal;white-space:nowrap;transform:scale(0.9600,1.0);transform-origin:center 9.8px;">CENTRAL</div>
<div style="position:absolute;left:346.60px;top:786.67px;width:54.4px;font-size:11.5px;line-height:11.5px;color:#e4e4e4;font-weight:normal;white-space:nowrap;transform:scale(0.9600,1.0);transform-origin:center 9.8px;">AMERICA</div>
<div style="position:absolute;left:459.3px;top:828.8px;width:32.6px;height:32.4px;background:#f29e38;border-radius:8px;box-shadow:0 0 0 1.6px #2b1c12"></div>
<div style="position:absolute;left:465.04px;top:836.22px;width:23.1px;font-size:19px;line-height:19px;color:#2a1a0e;font-weight:bold;white-space:nowrap;transform:scale(0.7811,1.0);transform-origin:center 16.1px;">52</div>
<div style="position:absolute;left:496.90000000000003px;top:828.8px;width:32.6px;height:32.4px;background:#e95f43;border-radius:8px;box-shadow:0 0 0 1.6px #2b1c12"></div>
<div style="position:absolute;left:502.64px;top:836.22px;width:23.1px;font-size:19px;line-height:19px;color:#fbe9e2;font-weight:bold;white-space:nowrap;transform:scale(0.7811,1.0);transform-origin:center 16.1px;">48</div>
<div style="position:absolute;left:462.42px;top:866.77px;width:66.6px;font-size:11.5px;line-height:11.5px;color:#e4e4e4;font-weight:normal;white-space:nowrap;transform:scale(0.9600,1.0);transform-origin:center 9.8px;">SOUTHERN</div>
<div style="position:absolute;left:468.50px;top:879.97px;width:54.4px;font-size:11.5px;line-height:11.5px;color:#e4e4e4;font-weight:normal;white-space:nowrap;transform:scale(0.9600,1.0);transform-origin:center 9.8px;">AMERICA</div>
<div style="position:absolute;left:656.0px;top:547.5px;width:32.6px;height:32.4px;background:#f29e38;border-radius:8px;box-shadow:0 0 0 1.6px #2b1c12"></div>
<div style="position:absolute;left:661.74px;top:554.92px;width:23.1px;font-size:19px;line-height:19px;color:#2a1a0e;font-weight:bold;white-space:nowrap;transform:scale(0.7811,1.0);transform-origin:center 16.1px;">50</div>
<div style="position:absolute;left:693.6px;top:547.5px;width:32.6px;height:32.4px;background:#e95f43;border-radius:8px;box-shadow:0 0 0 1.6px #2b1c12"></div>
<div style="position:absolute;left:699.34px;top:554.92px;width:23.1px;font-size:19px;line-height:19px;color:#fbe9e2;font-weight:bold;white-space:nowrap;transform:scale(0.7811,1.0);transform-origin:center 16.1px;">50</div>
<div style="position:absolute;left:658.10px;top:516.67px;width:67.0px;font-size:11.5px;line-height:11.5px;color:#e4e4e4;font-weight:normal;white-space:nowrap;transform:scale(0.9600,1.0);transform-origin:center 9.8px;">NORTHERN</div>
<div style="position:absolute;left:666.31px;top:529.87px;width:50.6px;font-size:11.5px;line-height:11.5px;color:#e4e4e4;font-weight:normal;white-space:nowrap;transform:scale(0.9600,1.0);transform-origin:center 9.8px;">EUROPE</div>
<div style="position:absolute;left:632.0px;top:627.8px;width:32.6px;height:32.4px;background:#f29e38;border-radius:8px;box-shadow:0 0 0 1.6px #2b1c12"></div>
<div style="position:absolute;left:637.74px;top:635.22px;width:23.1px;font-size:19px;line-height:19px;color:#2a1a0e;font-weight:bold;white-space:nowrap;transform:scale(0.7811,1.0);transform-origin:center 16.1px;">50</div>
<div style="position:absolute;left:669.6px;top:627.8px;width:32.6px;height:32.4px;background:#e95f43;border-radius:8px;box-shadow:0 0 0 1.6px #2b1c12"></div>
<div style="position:absolute;left:675.34px;top:635.22px;width:23.1px;font-size:19px;line-height:19px;color:#fbe9e2;font-weight:bold;white-space:nowrap;transform:scale(0.7811,1.0);transform-origin:center 16.1px;">50</div>
<div style="position:absolute;left:566.47px;top:633.17px;width:59.5px;font-size:11.5px;line-height:11.5px;color:#e4e4e4;font-weight:normal;white-space:nowrap;transform:scale(0.9600,1.0);transform-origin:right 9.8px;">WESTERN</div>
<div style="position:absolute;left:575.42px;top:646.37px;width:50.6px;font-size:11.5px;line-height:11.5px;color:#e4e4e4;font-weight:normal;white-space:nowrap;transform:scale(0.9600,1.0);transform-origin:right 9.8px;">EUROPE</div>
<div style="position:absolute;left:722.4000000000001px;top:614.6999999999999px;width:32.6px;height:32.4px;background:#f29e38;border-radius:8px;box-shadow:0 0 0 1.6px #2b1c12"></div>
<div style="position:absolute;left:728.14px;top:622.12px;width:23.1px;font-size:19px;line-height:19px;color:#2a1a0e;font-weight:bold;white-space:nowrap;transform:scale(0.7811,1.0);transform-origin:center 16.1px;">50</div>
<div style="position:absolute;left:760.0000000000001px;top:614.6999999999999px;width:32.6px;height:32.4px;background:#e95f43;border-radius:8px;box-shadow:0 0 0 1.6px #2b1c12"></div>
<div style="position:absolute;left:765.74px;top:622.12px;width:23.1px;font-size:19px;line-height:19px;color:#fbe9e2;font-weight:bold;white-space:nowrap;transform:scale(0.7811,1.0);transform-origin:center 16.1px;">50</div>
<div style="position:absolute;left:724.92px;top:653.97px;width:66.6px;font-size:11.5px;line-height:11.5px;color:#e4e4e4;font-weight:normal;white-space:nowrap;transform:scale(0.9600,1.0);transform-origin:center 9.8px;">SOUTHERN</div>
<div style="position:absolute;left:732.91px;top:667.17px;width:50.6px;font-size:11.5px;line-height:11.5px;color:#e4e4e4;font-weight:normal;white-space:nowrap;transform:scale(0.9600,1.0);transform-origin:center 9.8px;">EUROPE</div>
<div style="position:absolute;left:805.5px;top:575.5999999999999px;width:32.6px;height:32.4px;background:#f29e38;border-radius:8px;box-shadow:0 0 0 1.6px #2b1c12"></div>
<div style="position:absolute;left:811.24px;top:583.02px;width:23.1px;font-size:19px;line-height:19px;color:#2a1a0e;font-weight:bold;white-space:nowrap;transform:scale(0.7811,1.0);transform-origin:center 16.1px;">53</div>
<div style="position:absolute;left:843.1px;top:575.5999999999999px;width:32.6px;height:32.4px;background:#e95f43;border-radius:8px;box-shadow:0 0 0 1.6px #2b1c12"></div>
<div style="position:absolute;left:848.84px;top:583.02px;width:23.1px;font-size:19px;line-height:19px;color:#fbe9e2;font-weight:bold;white-space:nowrap;transform:scale(0.7811,1.0);transform-origin:center 16.1px;">47</div>
<div style="position:absolute;left:813.33px;top:545.47px;width:56.3px;font-size:11.5px;line-height:11.5px;color:#e4e4e4;font-weight:normal;white-space:nowrap;transform:scale(0.9600,1.0);transform-origin:center 9.8px;">EASTERN</div>
<div style="position:absolute;left:816.21px;top:558.67px;width:50.6px;font-size:11.5px;line-height:11.5px;color:#e4e4e4;font-weight:normal;white-space:nowrap;transform:scale(0.9600,1.0);transform-origin:center 9.8px;">EUROPE</div>
<div style="position:absolute;left:845.0px;top:636.8px;width:32.6px;height:32.4px;background:#f29e38;border-radius:8px;box-shadow:0 0 0 1.6px #2b1c12"></div>
<div style="position:absolute;left:850.74px;top:644.22px;width:23.1px;font-size:19px;line-height:19px;color:#2a1a0e;font-weight:bold;white-space:nowrap;transform:scale(0.7811,1.0);transform-origin:center 16.1px;">40</div>
<div style="position:absolute;left:882.6px;top:636.8px;width:32.6px;height:32.4px;background:#e95f43;border-radius:8px;box-shadow:0 0 0 1.6px #2b1c12"></div>
<div style="position:absolute;left:888.34px;top:644.22px;width:23.1px;font-size:19px;line-height:19px;color:#fbe9e2;font-weight:bold;white-space:nowrap;transform:scale(0.7811,1.0);transform-origin:center 16.1px;">60</div>
<div style="position:absolute;left:923.20px;top:641.47px;width:55.7px;font-size:11.5px;line-height:11.5px;color:#e4e4e4;font-weight:normal;white-space:nowrap;transform:scale(0.9600,1.0);transform-origin:left 9.8px;">CENTRAL</div>
<div style="position:absolute;left:923.20px;top:654.67px;width:28.2px;font-size:11.5px;line-height:11.5px;color:#e4e4e4;font-weight:normal;white-space:nowrap;transform:scale(0.9600,1.0);transform-origin:left 9.8px;">ASIA</div>
<div style="position:absolute;left:645.7px;top:691.1999999999999px;width:32.6px;height:32.4px;background:#f29e38;border-radius:8px;box-shadow:0 0 0 1.6px #2b1c12"></div>
<div style="position:absolute;left:651.44px;top:698.62px;width:23.1px;font-size:19px;line-height:19px;color:#2a1a0e;font-weight:bold;white-space:nowrap;transform:scale(0.7811,1.0);transform-origin:center 16.1px;">41</div>
<div style="position:absolute;left:683.3000000000001px;top:691.1999999999999px;width:32.6px;height:32.4px;background:#e95f43;border-radius:8px;box-shadow:0 0 0 1.6px #2b1c12"></div>
<div style="position:absolute;left:689.04px;top:698.62px;width:23.1px;font-size:19px;line-height:19px;color:#fbe9e2;font-weight:bold;white-space:nowrap;transform:scale(0.7811,1.0);transform-origin:center 16.1px;">59</div>
<div style="position:absolute;left:571.90px;top:696.57px;width:67.0px;font-size:11.5px;line-height:11.5px;color:#e4e4e4;font-weight:normal;white-space:nowrap;transform:scale(0.9600,1.0);transform-origin:right 9.8px;">NORTHERN</div>
<div style="position:absolute;left:594.71px;top:709.77px;width:44.2px;font-size:11.5px;line-height:11.5px;color:#e4e4e4;font-weight:normal;white-space:nowrap;transform:scale(0.9600,1.0);transform-origin:right 9.8px;">AFRICA</div>
<div style="position:absolute;left:790.1px;top:706.3px;width:32.6px;height:32.4px;background:#f29e38;border-radius:8px;box-shadow:0 0 0 1.6px #2b1c12"></div>
<div style="position:absolute;left:795.84px;top:713.72px;width:23.1px;font-size:19px;line-height:19px;color:#2a1a0e;font-weight:bold;white-space:nowrap;transform:scale(0.7811,1.0);transform-origin:center 16.1px;">42</div>
<div style="position:absolute;left:827.7px;top:706.3px;width:32.6px;height:32.4px;background:#e95f43;border-radius:8px;box-shadow:0 0 0 1.6px #2b1c12"></div>
<div style="position:absolute;left:833.44px;top:713.72px;width:23.1px;font-size:19px;line-height:19px;color:#fbe9e2;font-weight:bold;white-space:nowrap;transform:scale(0.7811,1.0);transform-origin:center 16.1px;">58</div>
<div style="position:absolute;left:796.33px;top:744.57px;width:59.5px;font-size:11.5px;line-height:11.5px;color:#e4e4e4;font-weight:normal;white-space:nowrap;transform:scale(0.9600,1.0);transform-origin:center 9.8px;">WESTERN</div>
<div style="position:absolute;left:812.00px;top:757.77px;width:28.2px;font-size:11.5px;line-height:11.5px;color:#e4e4e4;font-weight:normal;white-space:nowrap;transform:scale(0.9600,1.0);transform-origin:center 9.8px;">ASIA</div>
<div style="position:absolute;left:896.1px;top:729.4px;width:32.6px;height:32.4px;background:#f29e38;border-radius:8px;box-shadow:0 0 0 1.6px #2b1c12"></div>
<div style="position:absolute;left:901.84px;top:736.82px;width:23.1px;font-size:19px;line-height:19px;color:#2a1a0e;font-weight:bold;white-space:nowrap;transform:scale(0.7811,1.0);transform-origin:center 16.1px;">34</div>
<div style="position:absolute;left:933.7px;top:729.4px;width:32.6px;height:32.4px;background:#e95f43;border-radius:8px;box-shadow:0 0 0 1.6px #2b1c12"></div>
<div style="position:absolute;left:939.44px;top:736.82px;width:23.1px;font-size:19px;line-height:19px;color:#fbe9e2;font-weight:bold;white-space:nowrap;transform:scale(0.7811,1.0);transform-origin:center 16.1px;">66</div>
<div style="position:absolute;left:898.42px;top:768.57px;width:66.6px;font-size:11.5px;line-height:11.5px;color:#e4e4e4;font-weight:normal;white-space:nowrap;transform:scale(0.9600,1.0);transform-origin:center 9.8px;">SOUTHERN</div>
<div style="position:absolute;left:917.60px;top:781.77px;width:28.2px;font-size:11.5px;line-height:11.5px;color:#e4e4e4;font-weight:normal;white-space:nowrap;transform:scale(0.9600,1.0);transform-origin:center 9.8px;">ASIA</div>
<div style="position:absolute;left:1004.7px;top:688.1999999999999px;width:32.6px;height:32.4px;background:#f29e38;border-radius:8px;box-shadow:0 0 0 1.6px #2b1c12"></div>
<div style="position:absolute;left:1010.44px;top:695.62px;width:23.1px;font-size:19px;line-height:19px;color:#2a1a0e;font-weight:bold;white-space:nowrap;transform:scale(0.7811,1.0);transform-origin:center 16.1px;">49</div>
<div style="position:absolute;left:1042.3px;top:688.1999999999999px;width:32.6px;height:32.4px;background:#e95f43;border-radius:8px;box-shadow:0 0 0 1.6px #2b1c12"></div>
<div style="position:absolute;left:1048.04px;top:695.62px;width:23.1px;font-size:19px;line-height:19px;color:#fbe9e2;font-weight:bold;white-space:nowrap;transform:scale(0.7811,1.0);transform-origin:center 16.1px;">51</div>
<div style="position:absolute;left:1083.20px;top:693.07px;width:56.3px;font-size:11.5px;line-height:11.5px;color:#e4e4e4;font-weight:normal;white-space:nowrap;transform:scale(0.9600,1.0);transform-origin:left 9.8px;">EASTERN</div>
<div style="position:absolute;left:1083.20px;top:706.27px;width:28.2px;font-size:11.5px;line-height:11.5px;color:#e4e4e4;font-weight:normal;white-space:nowrap;transform:scale(0.9600,1.0);transform-origin:left 9.8px;">ASIA</div>
<div style="position:absolute;left:999.5px;top:785.3px;width:32.6px;height:32.4px;background:#f29e38;border-radius:8px;box-shadow:0 0 0 1.6px #2b1c12"></div>
<div style="position:absolute;left:1005.24px;top:792.72px;width:23.1px;font-size:19px;line-height:19px;color:#2a1a0e;font-weight:bold;white-space:nowrap;transform:scale(0.7811,1.0);transform-origin:center 16.1px;">49</div>
<div style="position:absolute;left:1037.1px;top:785.3px;width:32.6px;height:32.4px;background:#e95f43;border-radius:8px;box-shadow:0 0 0 1.6px #2b1c12"></div>
<div style="position:absolute;left:1042.84px;top:792.72px;width:23.1px;font-size:19px;line-height:19px;color:#fbe9e2;font-weight:bold;white-space:nowrap;transform:scale(0.7811,1.0);transform-origin:center 16.1px;">51</div>
<div style="position:absolute;left:1076.90px;top:790.27px;width:100.4px;font-size:11.5px;line-height:11.5px;color:#e4e4e4;font-weight:normal;white-space:nowrap;transform:scale(0.9600,1.0);transform-origin:left 9.8px;">SOUTH-EASTERN</div>
<div style="position:absolute;left:1076.90px;top:803.47px;width:28.2px;font-size:11.5px;line-height:11.5px;color:#e4e4e4;font-weight:normal;white-space:nowrap;transform:scale(0.9600,1.0);transform-origin:left 9.8px;">ASIA</div>
<div style="position:absolute;left:619.1px;top:760.5px;width:32.6px;height:32.4px;background:#f29e38;border-radius:8px;box-shadow:0 0 0 1.6px #2b1c12"></div>
<div style="position:absolute;left:624.84px;top:767.92px;width:23.1px;font-size:19px;line-height:19px;color:#2a1a0e;font-weight:bold;white-space:nowrap;transform:scale(0.7811,1.0);transform-origin:center 16.1px;">39</div>
<div style="position:absolute;left:656.7px;top:760.5px;width:32.6px;height:32.4px;background:#e95f43;border-radius:8px;box-shadow:0 0 0 1.6px #2b1c12"></div>
<div style="position:absolute;left:662.44px;top:767.92px;width:23.1px;font-size:19px;line-height:19px;color:#fbe9e2;font-weight:bold;white-space:nowrap;transform:scale(0.7811,1.0);transform-origin:center 16.1px;">61</div>
<div style="position:absolute;left:624.53px;top:798.37px;width:59.5px;font-size:11.5px;line-height:11.5px;color:#e4e4e4;font-weight:normal;white-space:nowrap;transform:scale(0.9600,1.0);transform-origin:center 9.8px;">WESTERN</div>
<div style="position:absolute;left:632.21px;top:811.57px;width:44.2px;font-size:11.5px;line-height:11.5px;color:#e4e4e4;font-weight:normal;white-space:nowrap;transform:scale(0.9600,1.0);transform-origin:center 9.8px;">AFRICA</div>
<div style="position:absolute;left:719.4000000000001px;top:780.0999999999999px;width:32.6px;height:32.4px;background:#f29e38;border-radius:8px;box-shadow:0 0 0 1.6px #2b1c12"></div>
<div style="position:absolute;left:725.14px;top:787.52px;width:23.1px;font-size:19px;line-height:19px;color:#2a1a0e;font-weight:bold;white-space:nowrap;transform:scale(0.7811,1.0);transform-origin:center 16.1px;">39</div>
<div style="position:absolute;left:757.0000000000001px;top:780.0999999999999px;width:32.6px;height:32.4px;background:#e95f43;border-radius:8px;box-shadow:0 0 0 1.6px #2b1c12"></div>
<div style="position:absolute;left:762.74px;top:787.52px;width:23.1px;font-size:19px;line-height:19px;color:#fbe9e2;font-weight:bold;white-space:nowrap;transform:scale(0.7811,1.0);transform-origin:center 16.1px;">61</div>
<div style="position:absolute;left:732.47px;top:750.87px;width:45.5px;font-size:11.5px;line-height:11.5px;color:#e4e4e4;font-weight:normal;white-space:nowrap;transform:scale(0.9600,1.0);transform-origin:center 9.8px;">MIDDLE</div>
<div style="position:absolute;left:733.11px;top:764.07px;width:44.2px;font-size:11.5px;line-height:11.5px;color:#e4e4e4;font-weight:normal;white-space:nowrap;transform:scale(0.9600,1.0);transform-origin:center 9.8px;">AFRICA</div>
<div style="position:absolute;left:786.4000000000001px;top:840.1999999999999px;width:32.6px;height:32.4px;background:#f29e38;border-radius:8px;box-shadow:0 0 0 1.6px #2b1c12"></div>
<div style="position:absolute;left:792.14px;top:847.62px;width:23.1px;font-size:19px;line-height:19px;color:#2a1a0e;font-weight:bold;white-space:nowrap;transform:scale(0.7811,1.0);transform-origin:center 16.1px;">40</div>
<div style="position:absolute;left:824.0000000000001px;top:840.1999999999999px;width:32.6px;height:32.4px;background:#e95f43;border-radius:8px;box-shadow:0 0 0 1.6px #2b1c12"></div>
<div style="position:absolute;left:829.74px;top:847.62px;width:23.1px;font-size:19px;line-height:19px;color:#fbe9e2;font-weight:bold;white-space:nowrap;transform:scale(0.7811,1.0);transform-origin:center 16.1px;">60</div>
<div style="position:absolute;left:864.50px;top:844.97px;width:56.3px;font-size:11.5px;line-height:11.5px;color:#e4e4e4;font-weight:normal;white-space:nowrap;transform:scale(0.9600,1.0);transform-origin:left 9.8px;">EASTERN</div>
<div style="position:absolute;left:864.50px;top:858.17px;width:44.2px;font-size:11.5px;line-height:11.5px;color:#e4e4e4;font-weight:normal;white-space:nowrap;transform:scale(0.9600,1.0);transform-origin:left 9.8px;">AFRICA</div>
<div style="position:absolute;left:716.1px;top:892.3px;width:32.6px;height:32.4px;background:#f29e38;border-radius:8px;box-shadow:0 0 0 1.6px #2b1c12"></div>
<div style="position:absolute;left:721.84px;top:899.72px;width:23.1px;font-size:19px;line-height:19px;color:#2a1a0e;font-weight:bold;white-space:nowrap;transform:scale(0.7811,1.0);transform-origin:center 16.1px;">49</div>
<div style="position:absolute;left:753.7px;top:892.3px;width:32.6px;height:32.4px;background:#e95f43;border-radius:8px;box-shadow:0 0 0 1.6px #2b1c12"></div>
<div style="position:absolute;left:759.44px;top:899.72px;width:23.1px;font-size:19px;line-height:19px;color:#fbe9e2;font-weight:bold;white-space:nowrap;transform:scale(0.7811,1.0);transform-origin:center 16.1px;">51</div>
<div style="position:absolute;left:718.42px;top:930.77px;width:66.6px;font-size:11.5px;line-height:11.5px;color:#e4e4e4;font-weight:normal;white-space:nowrap;transform:scale(0.9600,1.0);transform-origin:center 9.8px;">SOUTHERN</div>
<div style="position:absolute;left:729.61px;top:943.97px;width:44.2px;font-size:11.5px;line-height:11.5px;color:#e4e4e4;font-weight:normal;white-space:nowrap;transform:scale(0.9600,1.0);transform-origin:center 9.8px;">AFRICA</div>
<div style="position:absolute;left:1135.7px;top:882.6999999999999px;width:32.6px;height:32.4px;background:#f29e38;border-radius:8px;box-shadow:0 0 0 1.6px #2b1c12"></div>
<div style="position:absolute;left:1141.44px;top:890.12px;width:23.1px;font-size:19px;line-height:19px;color:#2a1a0e;font-weight:bold;white-space:nowrap;transform:scale(0.7811,1.0);transform-origin:center 16.1px;">50</div>
<div style="position:absolute;left:1173.3px;top:882.6999999999999px;width:32.6px;height:32.4px;background:#e95f43;border-radius:8px;box-shadow:0 0 0 1.6px #2b1c12"></div>
<div style="position:absolute;left:1179.04px;top:890.12px;width:23.1px;font-size:19px;line-height:19px;color:#fbe9e2;font-weight:bold;white-space:nowrap;transform:scale(0.7811,1.0);transform-origin:center 16.1px;">50</div>
<div style="position:absolute;left:1144.92px;top:921.17px;width:53.8px;font-size:11.5px;line-height:11.5px;color:#e4e4e4;font-weight:normal;white-space:nowrap;transform:scale(0.9600,1.0);transform-origin:center 9.8px;">OCEANIA</div>
<div style="position:absolute;left:1419px;top:72px;width:381px;height:1053px;background:#fff"></div>
<div style="position:absolute;left:1419px;top:72px;width:1px;height:1053px;background:#e0e0e0"></div>
<div style="position:absolute;left:1444.5px;top:99.99px;font-size:19.5px;line-height:19.5px;color:#242424;font-weight:bold;white-space:nowrap;font-family:"Liberation Sans",sans-serif;">Meeting chat</div>
<svg style="position:absolute;left:1706px;top:96px;" width="26" height="26" viewBox="1706 96 26 26"><rect x="1714" y="100.5" width="13" height="13" rx="2.3" fill="none" stroke="#424242" stroke-width="1.2"/><path d="M1711 103.5 V113.5 Q1711 116.5 1714 116.5 H1724" fill="none" stroke="#424242" stroke-width="1.2"/><path d="M1717.5 110.2 L1723.3 104.4 M1719.8 104.3 H1723.4 V107.9" fill="none" stroke="#424242" stroke-width="1.2" stroke-linecap="round"/></svg>
<svg style="position:absolute;left:1746px;top:98px;" width="22" height="22" viewBox="1746 98 22 22"><path d="M1750.2 102.3 L1763.8 115.8 M1763.8 102.3 L1750.2 115.8" stroke="#424242" stroke-width="1.15" stroke-linecap="round"/></svg>
<div style="position:absolute;left:1420px;top:143px;width:380px;height:1px;background:#e0e0e0"></div>
<svg style="position:absolute;left:1436px;top:158px;" width="26" height="20" viewBox="1436 158 26 20"><rect x="1439.5" y="161" width="13" height="13" rx="2.5" fill="none" stroke="#616161" stroke-width="1.3"/><path d="M1452.5 165.2 L1457.8 162.6 V171.4 L1452.5 168.8" fill="none" stroke="#616161" stroke-width="1.3" stroke-linejoin="round"/></svg>
<div style="position:absolute;left:1475.3px;top:159.00px;font-size:15px;line-height:15px;color:#616161;font-weight:normal;white-space:nowrap;font-family:"Liberation Sans",sans-serif;">06/02 09:12</div>
<div style="position:absolute;left:1571.0px;top:159.00px;font-size:15px;line-height:15px;color:#616161;font-weight:normal;white-space:nowrap;font-family:"Liberation Sans",sans-serif;">Meeting ended: <b style="color:#424242">9s</b></div>
<div style="position:absolute;left:1110.0px;width:1000px;text-align:center;top:203.80px;font-size:15px;line-height:15px;color:#616161;font-weight:normal;white-space:nowrap;font-family:"Liberation Sans",sans-serif;">7 February</div>
<div style="position:absolute;left:1110.0px;width:1000px;text-align:center;top:237.00px;font-size:15px;line-height:15px;color:#616161;font-weight:normal;white-space:nowrap;font-family:"Liberation Sans",sans-serif;">Today</div>
<svg style="position:absolute;left:1436px;top:268px;" width="26" height="20" viewBox="1436 268 26 20"><rect x="1439.5" y="271" width="13" height="13" rx="2.5" fill="none" stroke="#616161" stroke-width="1.3"/><path d="M1452.5 275.2 L1457.8 272.6 V281.4 L1452.5 278.8" fill="none" stroke="#616161" stroke-width="1.3" stroke-linejoin="round"/></svg>
<div style="position:absolute;left:1475.3px;top:268.80px;font-size:15px;line-height:15px;color:#616161;font-weight:normal;white-space:nowrap;font-family:"Liberation Sans",sans-serif;">15:09</div>
<div style="position:absolute;left:1527.6px;top:268.80px;font-size:15px;line-height:15px;color:#616161;font-weight:normal;white-space:nowrap;font-family:"Liberation Sans",sans-serif;">Meeting ended: <b style="color:#424242">59s</b></div>
<svg style="position:absolute;left:1436px;top:311px;" width="26" height="20" viewBox="1436 311 26 20"><rect x="1439.5" y="314" width="13" height="13" rx="2.5" fill="none" stroke="#616161" stroke-width="1.3"/><path d="M1452.5 318.2 L1457.8 315.6 V324.4 L1452.5 321.8" fill="none" stroke="#616161" stroke-width="1.3" stroke-linejoin="round"/></svg>
<div style="position:absolute;left:1475.3px;top:311.30px;font-size:15px;line-height:15px;color:#616161;font-weight:normal;white-space:nowrap;font-family:"Liberation Sans",sans-serif;">15:52</div>
<div style="position:absolute;left:1527.6px;top:311.30px;font-size:15px;line-height:15px;color:#616161;font-weight:normal;white-space:nowrap;font-family:"Liberation Sans",sans-serif;">Meeting started</div>
<div style="position:absolute;left:1456.0px;top:346.60px;font-size:15px;line-height:15px;color:#616161;font-weight:normal;white-space:nowrap;font-family:"Liberation Sans",sans-serif;">Maciej Mionskowski (Unverified)</div>
<div style="position:absolute;left:1680.0px;top:346.60px;font-size:15px;line-height:15px;color:#616161;font-weight:normal;white-space:nowrap;font-family:"Liberation Sans",sans-serif;">16:10</div>
<div style="position:absolute;left:1455px;top:365.5px;width:65px;height:42px;background:#f5f5f5;border-radius:6px"></div>
<div style="position:absolute;left:1437.5px;top:367.7px;width:32px;height:32px;border-radius:50%;background:#dcebf0"></div>
<div style="position:absolute;left:953.5px;width:1000px;text-align:center;top:377.73px;font-size:14.5px;line-height:14.5px;color:#2f6f78;font-weight:normal;white-space:nowrap;font-family:"Liberation Sans",sans-serif;">MM</div>
<div style="position:absolute;left:1475.3px;top:377.61px;font-size:17px;line-height:17px;color:#242424;font-weight:normal;white-space:nowrap;font-family:"Liberation Sans",sans-serif;">yes.</div>
<div style="position:absolute;left:1437.7px;top:995.8px;width:345px;height:100px;background:#fff;border:1px solid #e0e0e0;border-radius:6px;box-shadow:0 1px 2px rgba(0,0,0,.06)"></div>
<div style="position:absolute;left:1453.3px;top:1012.53px;font-size:16.5px;line-height:16.5px;color:#707070;font-weight:normal;white-space:nowrap;font-family:"Liberation Sans",sans-serif;">Type a message</div>
<svg style="position:absolute;left:1580px;top:1056px;" width="26" height="26" viewBox="1580 1056 26 26"><path d="M1583.5 1075 L1588 1061.5 L1592.5 1075 M1585 1070.5 H1591" fill="none" stroke="#424242" stroke-width="1.2"/><path d="M1590 1079 L1590.8 1075.5 L1599.5 1066.8 Q1601 1065.3 1602.2 1066.5 Q1603.4 1067.7 1601.9 1069.2 L1593.2 1077.9 Z" fill="none" stroke="#424242" stroke-width="1.2" stroke-linejoin="round"/></svg>
<svg style="position:absolute;left:1618px;top:1056px;" width="26" height="26" viewBox="1618 1056 26 26"><circle cx="1631" cy="1069.5" r="9.4" fill="none" stroke="#424242" stroke-width="1.2"/><circle cx="1628" cy="1067.2" r="1" fill="#424242"/><circle cx="1634" cy="1067.2" r="1" fill="#424242"/><path d="M1626.8 1071.8 Q1631 1075.5 1635.2 1071.8" fill="none" stroke="#424242" stroke-width="1.2" stroke-linecap="round"/></svg>
<svg style="position:absolute;left:1656px;top:1056px;" width="26" height="26" viewBox="1656 1056 26 26"><path d="M1660.7 1078.5 L1661.2 1073.5 A8.6 8.6 0 1 1 1665.5 1078.2 Z" fill="none" stroke="#424242" stroke-width="1.2" stroke-linejoin="round"/><path d="M1666.5 1076.5 V1064.8 H1669.5 Q1672.8 1064.8 1672.8 1068 Q1672.8 1071.2 1669.5 1071.2 H1666.5" fill="none" stroke="#424242" stroke-width="1.2" stroke-linejoin="round"/></svg>
<svg style="position:absolute;left:1694px;top:1056px;" width="26" height="26" viewBox="1694 1056 26 26"><path d="M1706.6 1060.5 V1078.5 M1697.6 1069.5 H1715.6" stroke="#424242" stroke-width="1.2" stroke-linecap="round"/></svg>
<div style="position:absolute;left:1731px;top:1055px;width:1px;height:28px;background:#e0e0e0"></div>
<svg style="position:absolute;left:1742px;top:1056px;" width="28" height="26" viewBox="1742 1056 28 26"><path d="M1746.5 1060.5 L1765.5 1069.5 L1746.5 1078.5 L1748.8 1069.5 Z M1748.8 1069.5 H1756" fill="none" stroke="#424242" stroke-width="1.3" stroke-linejoin="round"/></svg>
</body></html>
